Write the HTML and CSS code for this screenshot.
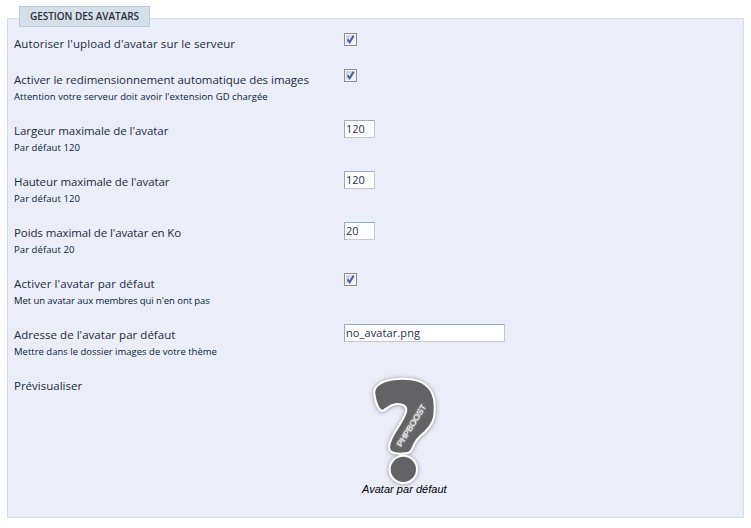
FILE: index.html
```html
<!DOCTYPE html>
<html lang="fr">
<head>
<meta charset="utf-8">
<title>Gestion des avatars</title>
<link rel="stylesheet" href="styles.css">
</head>
<body>
<svg class="defs" aria-hidden="true">
  <defs>
    <linearGradient id="shade" x1="0" y1="0" x2="1" y2="1"><stop offset="0" stop-color="#c4c9d3"/><stop offset="1" stop-color="#fafafa"/></linearGradient>
    <symbol id="checkbox" viewBox="0 0 13 13">
      <rect x=".5" y=".5" width="12" height="12" fill="#f6f6f4" stroke="#8b8c8d"/>
      <rect x="2" y="2" width="9" height="9" fill="url(#shade)"/>
      <path d="M3.5 6.3L5.7 9.2L9.6 2.7" fill="none" stroke="#4660a0" stroke-width="2"/>
    </symbol>
  </defs>
</svg>
<form class="panel">
  <h1 class="legend"><span class="t-legend">GESTION DES AVATARS</span></h1>
  <div class="row row-short">
    <div class="label"><span class="t1">Autoriser l'upload d'avatar sur le serveur</span></div>
    <svg class="check"><use href="#checkbox"/></svg>
  </div>
  <div class="row">
    <div class="label"><span class="t2">Activer le redimensionnement automatique des images</span><small class="s2">Attention votre serveur doit avoir l'extension GD chargée</small></div>
    <svg class="check"><use href="#checkbox"/></svg>
  </div>
  <div class="row">
    <div class="label"><span class="t3">Largeur maximale de l'avatar</span><small class="s3">Par défaut 120</small></div>
    <input class="field" type="text" value="120">
  </div>
  <div class="row">
    <div class="label"><span class="t4">Hauteur maximale de l'avatar</span><small class="s3">Par défaut 120</small></div>
    <input class="field" type="text" value="120">
  </div>
  <div class="row">
    <div class="label"><span class="t5">Poids maximal de l'avatar en Ko</span><small class="s3">Par défaut 20</small></div>
    <input class="field" type="text" value="20">
  </div>
  <div class="row">
    <div class="label"><span class="t6">Activer l'avatar par défaut</span><small class="s6">Met un avatar aux membres qui n'en ont pas</small></div>
    <svg class="check"><use href="#checkbox"/></svg>
  </div>
  <div class="row">
    <div class="label"><span class="t7">Adresse de l'avatar par défaut</span><small class="s7">Mettre dans le dossier images de votre thème</small></div>
    <input class="field field-wide" type="text" value="no_avatar.png">
  </div>
  <div class="row">
    <div class="label"><span class="t8">Prévisualiser</span></div>
    <svg class="avatar" viewBox="42 33 360 390">
      <defs>
        <filter id="glow" x="-20%" y="-20%" width="140%" height="140%"><feDropShadow dx="0" dy="1" stdDeviation="6" flood-color="#555" flood-opacity=".65"/></filter>
        <filter id="halo" x="-20%" y="-60%" width="140%" height="220%"><feDropShadow dx="0" dy="0" stdDeviation="4" flood-color="#fffff0" flood-opacity=".45"/></filter>
      </defs>
      <g fill="#636466" stroke="#fff" stroke-width="6" filter="url(#glow)">
        <circle cx="220" cy="328" r="41"/>
        <path d="M133 100C131 82 150 68 175 61C200 54 240 55 262 62C295 73 314 100 314 140C315 175 308 194 285 215C262 234 255 245 247 265C243 277 237 281 210 281C190 281 177 277 177 262C178 240 190 225 205 200C217 180 228 165 229 150C229 138 218 131 200 132C180 133 172 145 160 152C149 156 136 132 133 100Z"/>
      </g>
      <text class="brand" filter="url(#halo)" transform="translate(214 262) rotate(-58)" textLength="144" lengthAdjust="spacingAndGlyphs">PHPBOOST</text>
      <text class="caption" x="96" y="398" textLength="254">Avatar par défaut</text>
    </svg>
  </div>
</form>
</body>
</html>
```
FILE: styles.css
```css
* { box-sizing: border-box; }
body { margin: 0; padding: 6px 7px 0; background: #fff; font-family: "Trebuchet MS", "Open Sans", sans-serif; }
.defs { display: block; width: 0; height: 0; }
.panel {
  width: 737px;
  height: 500px;
  margin-top: 12px;
  padding: 0 6px;
  background: #ebeef9;
  border: 1px solid #d5dce7;
}
.legend {
  width: 131px;
  height: 21px;
  margin: -13px 0 6px 5px;
  padding-left: 10px;
  border: 1px solid #b8cbdd;
  background: #d6dfe8;
  color: #2b2f38;
  font-size: 10px;
  font-weight: 600;
  letter-spacing: -.05px;
  line-height: 19px;
  white-space: nowrap;
}
.row { display: flex; align-items: flex-start; height: 51px; }
.row-short { height: 36px; }
.label {
  display: flex;
  flex-direction: column;
  width: 330px;
  padding-top: 3px;
  color: #1d2a44;
  font-size: 11.5px;
  line-height: 16px;
  white-space: nowrap;
}
.label small { margin-top: 1px; color: #0a1a3c; font-size: 9.5px; }
.t1 { letter-spacing: .08px; }
.t2 { letter-spacing: -.03px; }
.t3 { letter-spacing: -.04px; }
.t4 { letter-spacing: -.1px; }
.t5 { letter-spacing: -.1px; }
.t6 { letter-spacing: .11px; }
.t7 { letter-spacing: .03px; }
.s2 { letter-spacing: .04px; }
.s3 { letter-spacing: .07px; }
.s6 { letter-spacing: -.07px; }
.check { width: 13px; height: 13px; }
.field {
  width: 31px;
  height: 18px;
  padding: 0 1px 1px;
  border: 1px solid #c8c8c8;
  border-top-color: #91aecb;
  border-left-color: #91aecb;
  border-radius: 0;
  background: #fff;
  color: #22304f;
  font: 11px/15px "Trebuchet MS", "Open Sans", sans-serif;
}
.field-wide { width: 161px; letter-spacing: .1px; }
.avatar { width: 120px; height: 130px; margin-top: -4px; }
.brand { fill: #fff; stroke: #fff; stroke-width: .7px; font: 25px "Liberation Sans", Arial, sans-serif; }
.caption { fill: #000; font: italic 33px "Liberation Sans", Arial, sans-serif; }
```
